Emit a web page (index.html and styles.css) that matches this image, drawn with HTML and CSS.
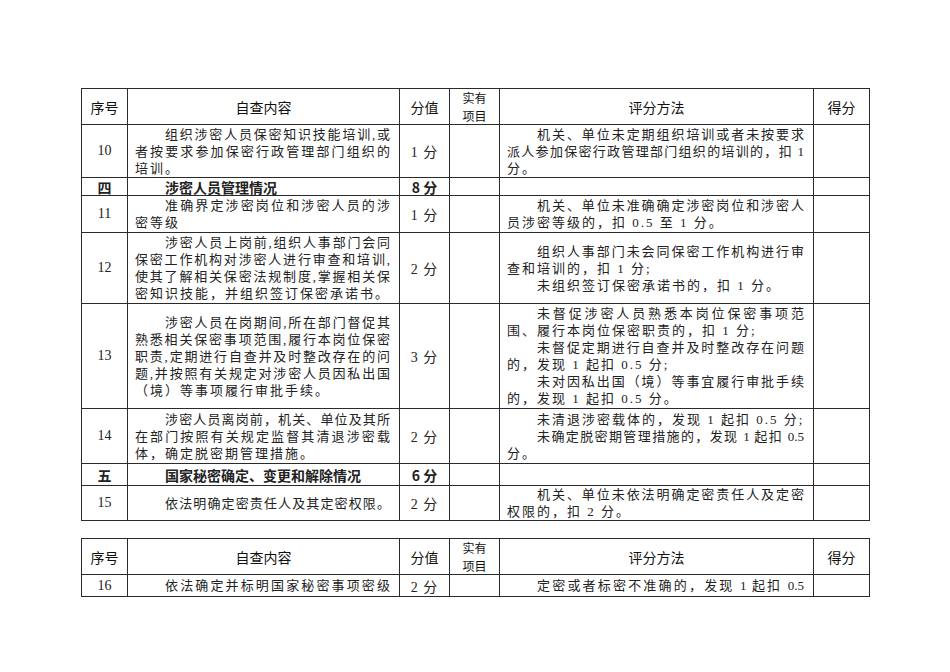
FILE: index.html
```html
<!DOCTYPE html>
<html lang="zh-CN">
<head>
<meta charset="utf-8">
<title>保密自查评分表</title>
<link rel="stylesheet" href="styles.css">
</head>
<body>
<main class="page">
<table class="sheet">
<colgroup><col class="c-no"><col class="c-item"><col class="c-pts"><col class="c-real"><col class="c-method"><col class="c-score"></colgroup>
<thead>
<tr class="head"><th>序号</th><th>自查内容</th><th>分值</th><th class="two"><span class="hl">实有</span><span class="hl">项目</span></th><th>评分方法</th><th>得分</th></tr>
</thead>
<tbody>
<tr class="h53">
<td class="no">10</td>
<td class="txt"><p class="j in">组织涉密人员保密知识技能培训,或</p><p class="j">者按要求参加保密行政管理部门组织的</p><p>培训。</p></td>
<td class="pts">1 分</td><td></td>
<td class="txt"><p class="j in">机关、单位未定期组织培训或者未按要求</p><p class="j">派人参加保密行政管理部门组织的培训的，扣 1</p><p>分。</p></td>
<td></td>
</tr>
<tr class="sec h18">
<td class="no">四</td><td class="stitle">涉密人员管理情况</td><td class="pts">8 分</td><td></td><td></td><td></td>
</tr>
<tr class="h37">
<td class="no">11</td>
<td class="txt"><p class="j in">准确界定涉密岗位和涉密人员的涉</p><p>密等级</p></td>
<td class="pts">1 分</td><td></td>
<td class="txt"><p class="j in">机关、单位未准确确定涉密岗位和涉密人</p><p>员涉密等级的，扣 0.5 至 1 分。</p></td>
<td></td>
</tr>
<tr class="h71">
<td class="no">12</td>
<td class="txt"><p class="j in">涉密人员上岗前,组织人事部门会同</p><p class="j">保密工作机构对涉密人进行审查和培训,</p><p class="j">使其了解相关保密法规制度,掌握相关保</p><p>密知识技能，并组织签订保密承诺书。</p></td>
<td class="pts">2 分</td><td></td>
<td class="txt"><p class="j in">组织人事部门未会同保密工作机构进行审</p><p>查和培训的，扣 1 分;</p><p class="in">未组织签订保密承诺书的，扣 1 分。</p></td>
<td></td>
</tr>
<tr class="h105">
<td class="no">13</td>
<td class="txt"><p class="j in">涉密人员在岗期间,所在部门督促其</p><p class="j">熟悉相关保密事项范围,履行本岗位保密</p><p class="j">职责,定期进行自查并及时整改存在的问</p><p class="j">题,并按照有关规定对涉密人员因私出国</p><p>（境）等事项履行审批手续。</p></td>
<td class="pts">3 分</td><td></td>
<td class="txt"><p class="j in">未督促涉密人员熟悉本岗位保密事项范</p><p>围、履行本岗位保密职责的，扣 1 分;</p><p class="j in">未督促定期进行自查并及时整改存在问题</p><p>的，发现 1 起扣 0.5 分;</p><p class="j in">未对因私出国（境）等事宜履行审批手续</p><p>的，发现 1 起扣 0.5 分。</p></td>
<td></td>
</tr>
<tr class="h55">
<td class="no">14</td>
<td class="txt"><p class="j in">涉密人员离岗前，机关、单位及其所</p><p class="j">在部门按照有关规定监督其清退涉密载</p><p>体，确定脱密期管理措施。</p></td>
<td class="pts">2 分</td><td></td>
<td class="txt"><p class="in">未清退涉密载体的，发现 1 起扣 0.5 分;</p><p class="j in">未确定脱密期管理措施的，发现 1 起扣 0.5</p><p>分。</p></td>
<td></td>
</tr>
<tr class="sec h22">
<td class="no">五</td><td class="stitle">国家秘密确定、变更和解除情况</td><td class="pts">6 分</td><td></td><td></td><td></td>
</tr>
<tr class="h34">
<td class="no">15</td>
<td class="txt"><p class="j in">依法明确定密责任人及其定密权限。</p></td>
<td class="pts">2 分</td><td></td>
<td class="txt"><p class="j in">机关、单位未依法明确定密责任人及定密</p><p>权限的，扣 2 分。</p></td>
<td></td>
</tr>
</tbody>
</table>

<table class="sheet second">
<colgroup><col class="c-no"><col class="c-item"><col class="c-pts"><col class="c-real"><col class="c-method"><col class="c-score"></colgroup>
<thead>
<tr class="head"><th>序号</th><th>自查内容</th><th>分值</th><th class="two"><span class="hl">实有</span><span class="hl">项目</span></th><th>评分方法</th><th>得分</th></tr>
</thead>
<tbody>
<tr class="h22">
<td class="no">16</td>
<td class="txt"><p class="j in">依法确定并标明国家秘密事项密级</p></td>
<td class="pts">2 分</td><td></td>
<td class="txt"><p class="j in">定密或者标密不准确的，发现 1 起扣 0.5</p></td>
<td></td>
</tr>
</tbody>
</table>
</main>
</body>
</html>
```
FILE: styles.css
```css
html, body {
  margin: 0;
  padding: 0;
  background: #ffffff;
}

.page {
  padding: 88px 0 0 81px;
  font-family: "Liberation Serif", "Noto Sans CJK SC", serif;
  font-size: 13px;
  color: #222222;
}

.sheet {
  border-collapse: collapse;
  table-layout: fixed;
  width: 788px;
}

.second {
  margin-top: 17px;
}

.c-no { width: 46px; }
.c-item { width: 272px; }
.c-pts { width: 50px; }
.c-real { width: 50px; }
.c-method { width: 314px; }
.c-score { width: 56px; }

.sheet th,
.sheet td {
  border: 1px solid #2a2a2a;
  padding: 0;
  vertical-align: middle;
}

.head { height: 35px; }

.head th {
  font-family: "Noto Sans CJK SC", sans-serif;
  font-weight: 400;
  font-size: 14px;
  line-height: 18px;
  text-align: center;
  color: #111111;
}

.head th.two {
  font-size: 12px;
  line-height: 17.5px;
}

.hl {
  display: block;
}

.h18 { height: 18px; }
.h22 { height: 22px; }
.h34 { height: 34px; }
.h37 { height: 37px; }
.h53 { height: 53px; }
.h55 { height: 55px; }
.h71 { height: 71px; }
.h105 { height: 105px; }

.no {
  text-align: center;
  font-size: 14px;
}

.pts {
  text-align: center;
  font-size: 14px;
  letter-spacing: 1px;
}

.txt {
  padding: 0 9px 0 7px !important;
  line-height: 17px;
}

.txt p {
  margin: 0;
  text-align: left;
  white-space: nowrap;
  letter-spacing: 2px;
}

.txt p.j {
  white-space: normal;
  letter-spacing: 0;
  text-align: justify;
  text-align-last: justify;
}

.txt p.in {
  text-indent: 30px;
}

.sec td {
  font-family: "Noto Sans CJK SC", sans-serif;
  font-weight: 700;
  font-size: 14px;
  line-height: 16px;
  letter-spacing: 0;
}

.sec .stitle {
  padding-left: 37px;
}
```
